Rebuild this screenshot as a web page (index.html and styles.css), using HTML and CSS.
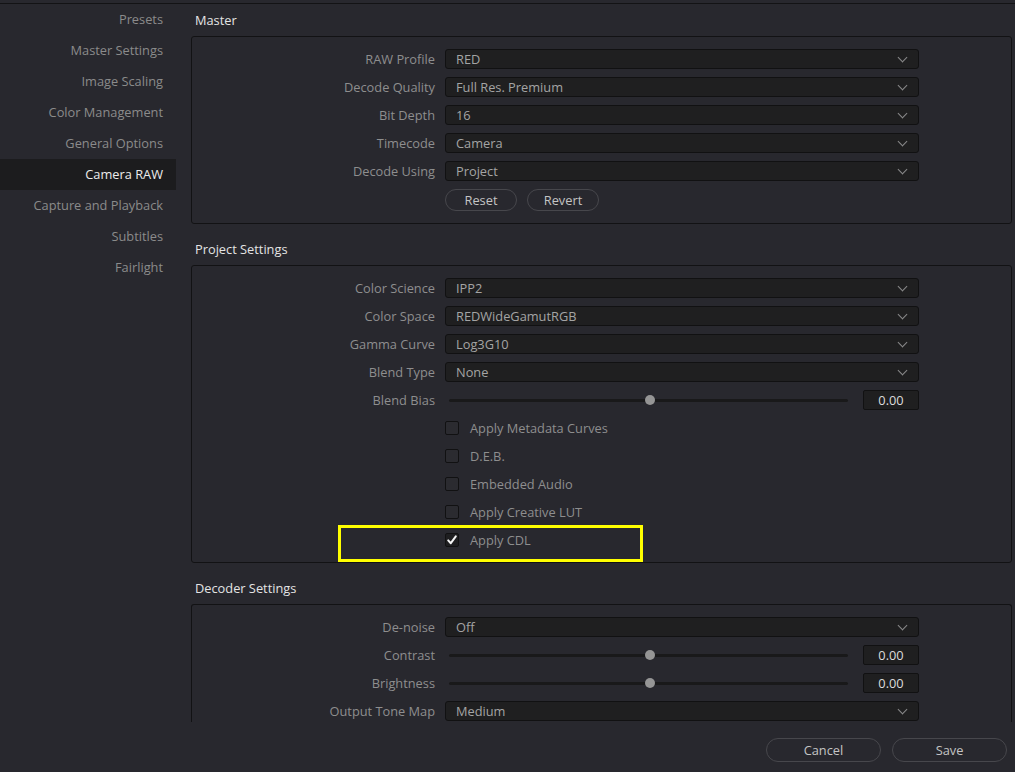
FILE: index.html
```html
<!DOCTYPE html>
<html lang="en">
<head>
    <meta charset="UTF-8">
    <title>Project Settings - Camera RAW</title>
    <link rel="stylesheet" href="styles.css">
</head>
<body>
    <div class="window">
        <div class="main">
            <ul class="sidebar">
                <li>Presets</li>
                <li>Master Settings</li>
                <li>Image Scaling</li>
                <li>Color Management</li>
                <li>General Options</li>
                <li class="active">Camera RAW</li>
                <li>Capture and Playback</li>
                <li>Subtitles</li>
                <li>Fairlight</li>
            </ul>

            <div class="content">
                <!-- Master -->
                <div class="section">
                    <div class="section-title">Master</div>
                    <div class="panel">
                        <div class="row">
                            <label>RAW Profile</label>
                            <div class="dropdown">RED</div>
                        </div>
                        <div class="row">
                            <label>Decode Quality</label>
                            <div class="dropdown">Full Res. Premium</div>
                        </div>
                        <div class="row">
                            <label>Bit Depth</label>
                            <div class="dropdown">16</div>
                        </div>
                        <div class="row">
                            <label>Timecode</label>
                            <div class="dropdown">Camera</div>
                        </div>
                        <div class="row">
                            <label>Decode Using</label>
                            <div class="dropdown">Project</div>
                        </div>
                        <div class="row buttons">
                            <label></label>
                            <div class="btn-group">
                                <button class="pill small">Reset</button>
                                <button class="pill small">Revert</button>
                            </div>
                        </div>
                    </div>
                </div>

                <!-- Project Settings -->
                <div class="section">
                    <div class="section-title">Project Settings</div>
                    <div class="panel">
                        <div class="row">
                            <label>Color Science</label>
                            <div class="dropdown">IPP2</div>
                        </div>
                        <div class="row">
                            <label>Color Space</label>
                            <div class="dropdown">REDWideGamutRGB</div>
                        </div>
                        <div class="row">
                            <label>Gamma Curve</label>
                            <div class="dropdown">Log3G10</div>
                        </div>
                        <div class="row">
                            <label>Blend Type</label>
                            <div class="dropdown">None</div>
                        </div>
                        <div class="row">
                            <label>Blend Bias</label>
                            <div class="slider"><span class="knob"></span></div>
                            <div class="number">0.00</div>
                        </div>
                        <div class="row">
                            <label></label>
                            <span class="checkbox"></span>
                            <span class="check-label">Apply Metadata Curves</span>
                        </div>
                        <div class="row">
                            <label></label>
                            <span class="checkbox"></span>
                            <span class="check-label">D.E.B.</span>
                        </div>
                        <div class="row">
                            <label></label>
                            <span class="checkbox"></span>
                            <span class="check-label">Embedded Audio</span>
                        </div>
                        <div class="row">
                            <label></label>
                            <span class="checkbox"></span>
                            <span class="check-label">Apply Creative LUT</span>
                        </div>
                        <div class="row">
                            <label></label>
                            <span class="checkbox checked">
                                <svg width="12" height="12" viewBox="0 0 12 12"><path d="M2.2 6.4 L4.8 9.2 L9.8 2.4" fill="none" stroke="#f4f4f4" stroke-width="2" stroke-linecap="round" stroke-linejoin="round"/></svg>
                            </span>
                            <span class="check-label">Apply CDL</span>
                        </div>
                        <div class="highlight"></div>
                    </div>
                </div>

                <!-- Decoder Settings -->
                <div class="section">
                    <div class="section-title">Decoder Settings</div>
                    <div class="panel open">
                        <div class="row">
                            <label>De-noise</label>
                            <div class="dropdown">Off</div>
                        </div>
                        <div class="row">
                            <label>Contrast</label>
                            <div class="slider"><span class="knob"></span></div>
                            <div class="number">0.00</div>
                        </div>
                        <div class="row">
                            <label>Brightness</label>
                            <div class="slider"><span class="knob"></span></div>
                            <div class="number">0.00</div>
                        </div>
                        <div class="row">
                            <label>Output Tone Map</label>
                            <div class="dropdown">Medium</div>
                        </div>
                    </div>
                </div>
            </div>
        </div>

        <div class="footer">
            <button class="pill">Cancel</button>
            <button class="pill">Save</button>
        </div>
    </div>
</body>
</html>
```

FILE: styles.css
```css
body {
    margin: 0;
    padding-top: 3px;
    background-color: #28282e;
    font-family: "Open Sans", "Noto Sans", sans-serif;
    font-size: 12.8px;
    color: #8e8e8e;
}
.window {
    border-top: 1px solid #131315;
}
.main {
    display: flex;
    height: 718px;
    overflow: hidden;
}
.sidebar {
    list-style: none;
    margin: 0;
    padding: 0;
    width: 176px;
    flex-shrink: 0;
}
.sidebar li {
    height: 31px;
    line-height: 31px;
    text-align: right;
    padding-right: 13px;
    color: #8b8b8b;
}
.sidebar li.active {
    background-color: #1c1c1e;
    color: #ececec;
}
.content {
    flex: 1;
    padding-left: 15px;
    padding-right: 3px;
}
.section + .section {
    margin-top: 9px;
}
.section-title {
    height: 32px;
    line-height: 32px;
    padding-left: 4px;
    color: #e4e4e4;
}
.panel {
    position: relative;
    border: 1px solid #121214;
    border-radius: 3px;
    padding: 12px 0 12px 0;
    display: flex;
    flex-direction: column;
    gap: 8px;
}
.panel.open {
    border-bottom: none;
    padding-bottom: 40px;
}
.row {
    display: flex;
    align-items: center;
    height: 20px;
}
.row.buttons {
    height: 22px;
}
.row label {
    width: 243px;
    flex-shrink: 0;
    text-align: right;
    margin-right: 10px;
    color: #8e8e8e;
}
.dropdown {
    width: 474px;
    height: 20px;
    box-sizing: border-box;
    background-color: #1f1f20;
    border: 1px solid #111112;
    border-radius: 3px;
    padding: 0 10px;
    line-height: 18px;
    color: #a4a4a4;
    display: flex;
    justify-content: space-between;
    align-items: center;
}
.dropdown::after {
    content: "";
    width: 6px;
    height: 6px;
    border-right: 1.5px solid #8a8a8a;
    border-bottom: 1.5px solid #8a8a8a;
    transform: rotate(45deg);
    margin-right: 2px;
    margin-top: -4px;
}
.btn-group {
    display: flex;
    gap: 10px;
    height: 22px;
}
.pill {
    background: transparent;
    border: 1px solid #47474c;
    border-radius: 12px;
    color: #c4c4c4;
    font-family: "Open Sans", "Noto Sans", sans-serif;
    font-size: 12.8px;
    cursor: pointer;
    padding: 0;
}
.pill.small {
    width: 72px;
    height: 22px;
    border-radius: 11px;
}
.slider {
    position: relative;
    width: 399px;
    height: 3px;
    margin-left: 4px;
    background-color: #19191a;
    border-radius: 2px;
}
.knob {
    position: absolute;
    left: 196px;
    top: -4px;
    width: 10px;
    height: 10px;
    border-radius: 50%;
    background-color: #959595;
}
.number {
    margin-left: 15px;
    width: 56px;
    height: 20px;
    box-sizing: border-box;
    background-color: #1f1f20;
    border: 1px solid #111112;
    border-radius: 2px;
    text-align: center;
    line-height: 18px;
    color: #dcdcdc;
}
.checkbox {
    width: 14px;
    height: 14px;
    box-sizing: border-box;
    border: 1px solid #111112;
    border-radius: 2px;
    background-color: #2b2b30;
    display: flex;
    align-items: center;
    justify-content: center;
}
.checkbox.checked {
    background-color: #1e1e20;
}
.check-label {
    margin-left: 11px;
    color: #8e8e8e;
}
.highlight {
    position: absolute;
    left: 146px;
    top: 259px;
    width: 305px;
    height: 37px;
    box-sizing: border-box;
    border: 3px solid #ffff00;
}
.footer {
    height: 50px;
    display: flex;
    justify-content: flex-end;
    align-items: flex-start;
    gap: 11px;
    padding-right: 8px;
}
.footer .pill {
    margin-top: 16px;
    width: 115px;
    height: 24px;
}
```
